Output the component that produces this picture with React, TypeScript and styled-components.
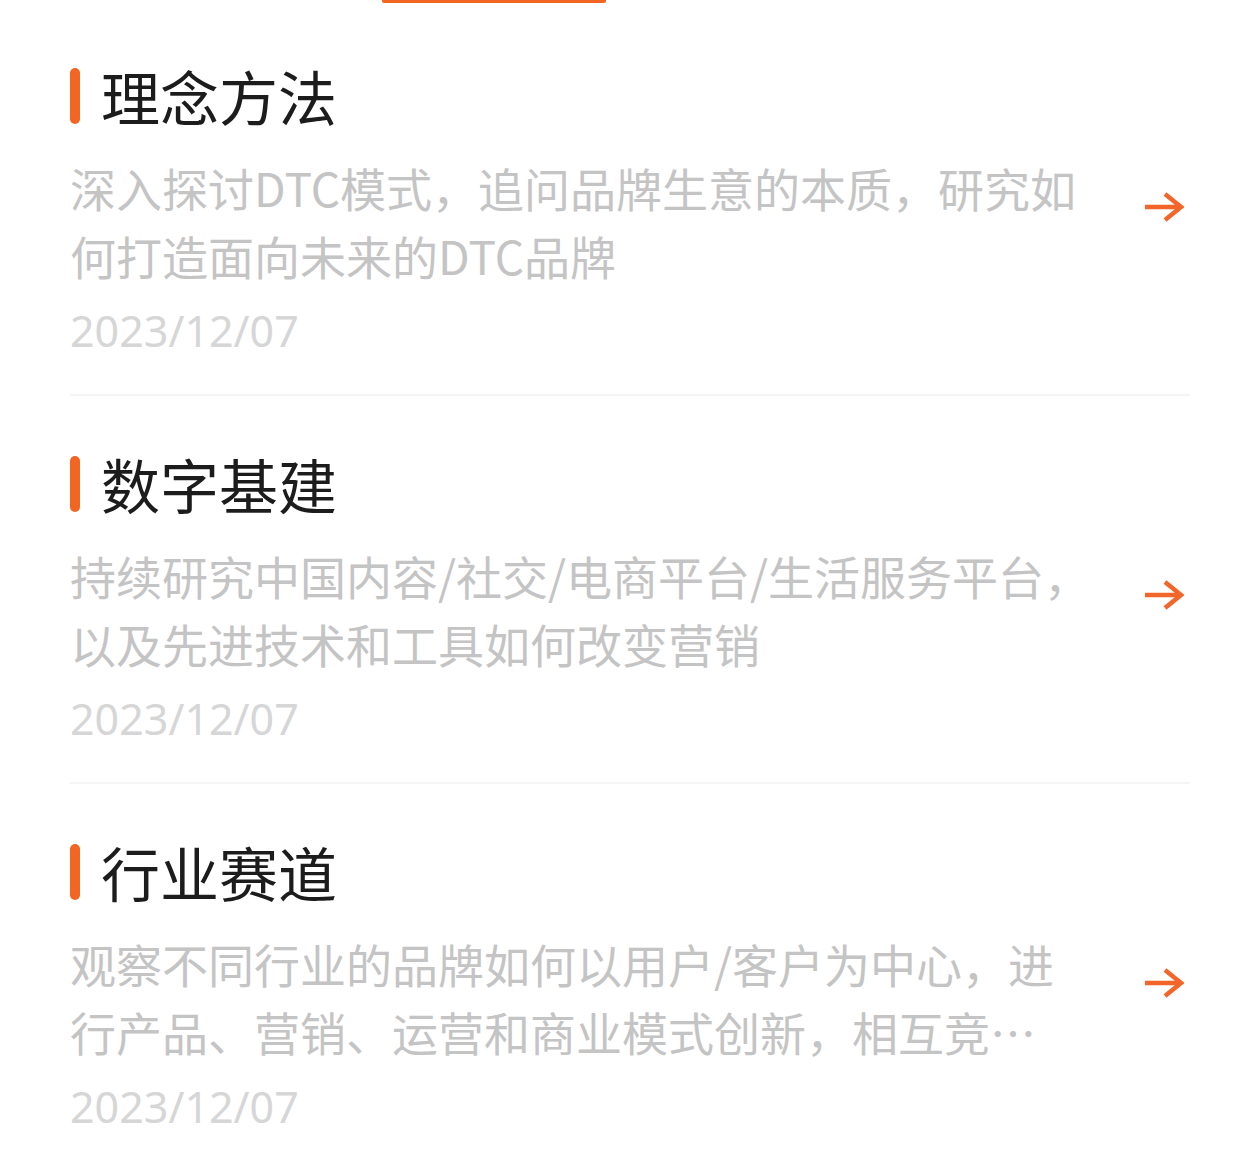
import React from 'react';
import styled, { createGlobalStyle } from 'styled-components';

type Topic = {
  id: number;
  title: string;
  desc: string;
  date: string;
};

const topics: Topic[] = [
  {
    id: 1,
    title: '理念方法',
    desc: '深入探讨DTC模式，追问品牌生意的本质，研究如何打造面向未来的DTC品牌',
    date: '2023/12/07',
  },
  {
    id: 2,
    title: '数字基建',
    desc: '持续研究中国内容/社交/电商平台/生活服务平台，以及先进技术和工具如何改变营销',
    date: '2023/12/07',
  },
  {
    id: 3,
    title: '行业赛道',
    desc: '观察不同行业的品牌如何以用户/客户为中心，进行产品、营销、运营和商业模式创新，相互竞…',
    date: '2023/12/07',
  },
];

const ArrowIcon = () => (
  <svg width="40" height="32" viewBox="0 0 40 32" fill="none">
    <path d="M1 16H37" stroke="#f2662a" strokeWidth="4.5" />
    <path d="M21 3L37 16L21 29" stroke="#f2662a" strokeWidth="4.5" strokeLinejoin="miter" />
  </svg>
);

export default function App() {
  return (
    <>
      <GlobalStyle />
      <Page>
        <TabTrack>
          <TabIndicator />
        </TabTrack>
        <List>
          {topics.map((t) => (
            <Item key={t.id}>
              <TitleRow>
                <Mark />
                <Title>{t.title}</Title>
              </TitleRow>
              <Body>
                <Desc>{t.desc}</Desc>
                <ArrowBox>
                  <ArrowIcon />
                </ArrowBox>
              </Body>
              <DateText>{t.date}</DateText>
            </Item>
          ))}
        </List>
      </Page>
    </>
  );
}

const GlobalStyle = createGlobalStyle`
  body {
    margin: 0;
    background: #ffffff;
    font-family: "Noto Sans CJK SC", "Noto Sans", sans-serif;
  }
`;

const Page = styled.div`
  width: 1260px;
  height: 1170px;
  overflow: hidden;
  background: #ffffff;
`;

const TabTrack = styled.div`
  height: 3px;
  padding-left: 382px;
`;

const TabIndicator = styled.div`
  width: 224px;
  height: 3px;
  background: #f26522;
  border-radius: 0 0 2px 2px;
`;

const List = styled.div`
  padding: 0 70px;
`;

const Item = styled.div`
  padding-top: 60px;
  padding-bottom: 33px;
  border-bottom: 2px solid #f4f4f4;
  &:first-child {
    padding-top: 65px;
  }
`;

const TitleRow = styled.div`
  display: flex;
  align-items: center;
  height: 56px;
`;

const Mark = styled.div`
  width: 10px;
  height: 56px;
  border-radius: 5px;
  background: #f26522;
  margin-right: 21px;
`;

const Title = styled.div`
  font-size: 59px;
  line-height: 56px;
  font-weight: 400;
  color: #1c1c1c;
`;

const Body = styled.div`
  display: flex;
  align-items: flex-start;
  margin-top: 29px;
`;

const Desc = styled.div`
  width: 1028px;
  font-size: 46px;
  line-height: 68px;
  color: #c4c4c4;
  display: -webkit-box;
  -webkit-line-clamp: 2;
  -webkit-box-orient: vertical;
  overflow: hidden;
`;

const ArrowBox = styled.div`
  margin-left: auto;
  margin-top: 38px;
  margin-right: 6px;
  display: flex;
`;

const DateText = styled.div`
  margin-top: 12px;
  font-family: "Noto Sans", sans-serif;
  font-size: 43px;
  line-height: 60px;
  color: #d6d6d6;
`;
